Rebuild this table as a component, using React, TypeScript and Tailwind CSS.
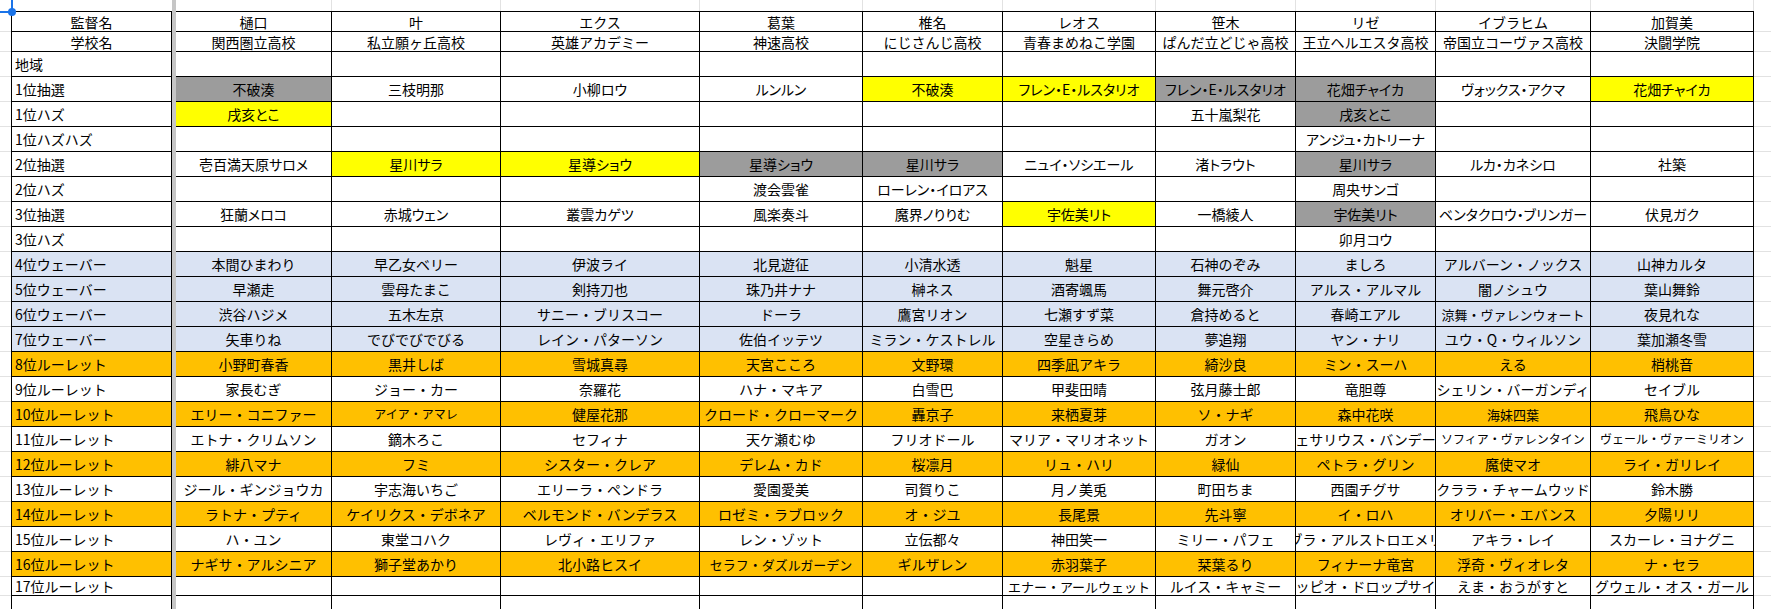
import clsx from "clsx";

type Tone = "w" | "b" | "o";

const HEAD: [string, string][] = [
  ["樋口", "関西圏立高校"],
  ["叶", "私立願ヶ丘高校"],
  ["エクス", "英雄アカデミー"],
  ["葛葉", "神速高校"],
  ["椎名", "にじさんじ高校"],
  ["レオス", "青春まめねこ学園"],
  ["笹木", "ぱんだ立どじゃ高校"],
  ["リゼ", "王立ヘルエスタ高校"],
  ["イブラヒム", "帝国立コーヴァス高校"],
  ["加賀美", "決闘学院"],
];

const E = ["", "", "", "", "", "", "", "", "", ""];

// "flags|text"  g = gray, y = yellow, s = 12px, m = 13px
const ROWS: { label: string; tone: Tone; cells: string[]; palt?: boolean }[] = [
  { label: "地域", tone: "w", cells: E },
  {
    label: "1位抽選",
    tone: "w",
    palt: true,
    cells: ["g|不破湊", "三枝明那", "小柳ロウ", "ルンルン", "y|不破湊", "y|フレン・E・ルスタリオ", "g|フレン・E・ルスタリオ", "g|花畑チャイカ", "ヴォックス・アクマ", "y|花畑チャイカ"],
  },
  { label: "1位ハズ", tone: "w", palt: true, cells: ["y|戌亥とこ", "", "", "", "", "", "五十嵐梨花", "g|戌亥とこ", "", ""] },
  { label: "1位ハズハズ", tone: "w", palt: true, cells: ["", "", "", "", "", "", "", "アンジュ・カトリーナ", "", ""] },
  {
    label: "2位抽選",
    tone: "w",
    palt: true,
    cells: ["壱百満天原サロメ", "y|星川サラ", "y|星導ショウ", "g|星導ショウ", "g|星川サラ", "ニュイ・ソシエール", "渚トラウト", "g|星川サラ", "ルカ・カネシロ", "社築"],
  },
  { label: "2位ハズ", tone: "w", palt: true, cells: ["", "", "", "渡会雲雀", "ローレン・イロアス", "", "", "周央サンゴ", "", ""] },
  {
    label: "3位抽選",
    tone: "w",
    palt: true,
    cells: ["狂蘭メロコ", "赤城ウェン", "叢雲カゲツ", "風楽奏斗", "魔界ノりりむ", "y|宇佐美リト", "一橋綾人", "g|宇佐美リト", "ベンタクロウ・ブリンガー", "伏見ガク"],
  },
  { label: "3位ハズ", tone: "w", palt: true, cells: ["", "", "", "", "", "", "", "卯月コウ", "", ""] },
  {
    label: "4位ウェーバー",
    tone: "b",
    cells: ["本間ひまわり", "早乙女ベリー", "伊波ライ", "北見遊征", "小清水透", "魁星", "石神のぞみ", "ましろ", "アルバーン・ノックス", "山神カルタ"],
  },
  {
    label: "5位ウェーバー",
    tone: "b",
    cells: ["早瀬走", "雲母たまこ", "剣持刀也", "珠乃井ナナ", "榊ネス", "酒寄颯馬", "舞元啓介", "アルス・アルマル", "闇ノシュウ", "葉山舞鈴"],
  },
  {
    label: "6位ウェーバー",
    tone: "b",
    cells: ["渋谷ハジメ", "五木左京", "サニー・ブリスコー", "ドーラ", "鷹宮リオン", "七瀬すず菜", "倉持めると", "春崎エアル", "m|涼舞・ヴァレンウォート", "夜見れな"],
  },
  {
    label: "7位ウェーバー",
    tone: "b",
    cells: ["矢車りね", "でびでびでびる", "レイン・パターソン", "佐伯イッテツ", "ミラン・ケストレル", "空星きらめ", "夢追翔", "ヤン・ナリ", "ユウ・Q・ウィルソン", "葉加瀬冬雪"],
  },
  {
    label: "8位ルーレット",
    tone: "o",
    cells: ["小野町春香", "黒井しば", "雪城真尋", "天宮こころ", "文野環", "四季凪アキラ", "綺沙良", "ミン・スーハ", "える", "梢桃音"],
  },
  {
    label: "9位ルーレット",
    tone: "w",
    cells: ["家長むぎ", "ジョー・カー", "奈羅花", "ハナ・マキア", "白雪巴", "甲斐田晴", "弦月藤士郎", "竜胆尊", "シェリン・バーガンディ", "セイブル"],
  },
  {
    label: "10位ルーレット",
    tone: "o",
    cells: ["エリー・コニファー", "s|アイア・アマレ", "健屋花那", "クロード・クローマーク", "轟京子", "来栖夏芽", "ソ・ナギ", "森中花咲", "m|海妹四葉", "飛鳥ひな"],
  },
  {
    label: "11位ルーレット",
    tone: "w",
    cells: ["エトナ・クリムソン", "鏑木ろこ", "セフィナ", "天ケ瀬むゆ", "フリオドール", "マリア・マリオネット", "ガオン", "ヴェサリウス・バンデーラ", "s|ソフィア・ヴァレンタイン", "s|ヴェール・ヴァーミリオン"],
  },
  {
    label: "12位ルーレット",
    tone: "o",
    cells: ["緋八マナ", "フミ", "シスター・クレア", "デレム・カド", "桜凛月", "リュ・ハリ", "緑仙", "ペトラ・グリン", "魔使マオ", "ライ・ガリレイ"],
  },
  {
    label: "13位ルーレット",
    tone: "w",
    cells: ["ジール・ギンジョウカ", "宇志海いちご", "エリーラ・ペンドラ", "愛園愛美", "司賀りこ", "月ノ美兎", "町田ちま", "西園チグサ", "クララ・チャームウッド", "鈴木勝"],
  },
  {
    label: "14位ルーレット",
    tone: "o",
    cells: ["ラトナ・プティ", "ケイリクス・デボネア", "ベルモンド・バンデラス", "ロゼミ・ラブロック", "オ・ジユ", "長尾景", "先斗寧", "イ・ロハ", "オリバー・エバンス", "夕陽リリ"],
  },
  {
    label: "15位ルーレット",
    tone: "w",
    cells: ["ハ・ユン", "東堂コハク", "レヴィ・エリファ", "レン・ゾット", "立伝都々", "神田笑一", "ミリー・パフェ", "ガブラ・アルストロエメリア", "アキラ・レイ", "スカーレ・ヨナグニ"],
  },
  {
    label: "16位ルーレット",
    tone: "o",
    cells: ["ナギサ・アルシニア", "獅子堂あかり", "北小路ヒスイ", "m|セラフ・ダズルガーデン", "ギルザレン", "赤羽葉子", "栞葉るり", "フィナーナ竜宮", "浮奇・ヴィオレタ", "ナ・セラ"],
  },
];

const LAST = ["", "", "", "", "", "m|エナー・アールウェット", "ルイス・キャミー", "ルッピオ・ドロップサイド", "えま・おうがすと", "グウェル・オス・ガール"];

const toneBg: Record<Tone, string> = {
  w: "bg-white",
  b: "bg-[#dae3f3]",
  o: "bg-[#ffc000]",
};

function parse(c: string) {
  const i = c.indexOf("|");
  const flags = i >= 0 ? c.slice(0, i) : "";
  const text = i >= 0 ? c.slice(i + 1) : c;
  return {
    text,
    fill: flags.includes("g") ? "bg-[#9c9c9c]" : flags.includes("y") ? "bg-[#ffff00]" : "",
    size: flags.includes("s") ? "text-[12px]" : flags.includes("m") ? "text-[13px]" : "",
  };
}

function SheetRow({
  label,
  tone = "w",
  cells,
  top = false,
  bottom = true,
  center = false,
  palt = false,
}: {
  label: string;
  tone?: Tone;
  cells: string[];
  top?: boolean;
  bottom?: boolean;
  center?: boolean;
  palt?: boolean;
}) {
  const bg = toneBg[tone];
  return (
    <>
      <div className={clsx(bottom && "border-b border-[#e2e2e2]")} />
      <div
        className={clsx(
          "flex items-center overflow-hidden whitespace-nowrap border-l border-r border-black",
          bottom && "border-b",
          top && "border-t",
          center ? "justify-center" : "pl-[3px]",
          bg
        )}
      >
        {label}
      </div>
      <div className="bg-[#c6c6c6]" />
      {cells.map((c, i) => {
        const p = parse(c);
        return (
          <div
            key={i}
            className={clsx(
              "flex items-center justify-center overflow-hidden whitespace-nowrap border-r border-black",
              bottom && "border-b",
              top && "border-t",
              p.fill || bg,
              p.size,
              palt && "[font-feature-settings:'palt']"
            )}
          >
            {p.text}
          </div>
        );
      })}
      <div className={clsx(bottom && "border-b border-[#e2e2e2]")} />
    </>
  );
}

export default function App() {
  return (
    <div className="relative h-[609px] w-[1771px] overflow-hidden bg-white font-['Noto_Sans_CJK_JP',sans-serif] text-[14px] leading-none text-black">
      <div className="grid h-full grid-cols-[11px_161px_4px_156px_169px_199px_163px_140px_153px_140px_140px_155px_163px_1fr] grid-rows-[11px_21px_20px_repeat(21,25px)_19px_1fr]">
        {/* strip above the sheet */}
        <div />
        <div />
        <div className="bg-[#c6c6c6]" />
        {E.map((_, i) => (
          <div key={i} className="border-r border-[#e2e2e2]" />
        ))}
        <div />

        <SheetRow label="監督名" cells={HEAD.map((h) => h[0])} top center />
        <SheetRow label="学校名" cells={HEAD.map((h) => h[1])} center />
        {ROWS.map((r) => (
          <SheetRow key={r.label} label={r.label} tone={r.tone} cells={r.cells} palt={r.palt} />
        ))}
        <SheetRow label="17位ルーレット" cells={LAST} />
        <SheetRow label="" cells={E} bottom={false} />
      </div>

      {/* selection handle */}
      <div className="absolute left-0 top-[11px] h-[2px] w-[12px] bg-[#1a73e8]" />
      <div className="absolute left-[11px] top-0 h-[12px] w-[2px] bg-[#1a73e8]" />
      <div className="absolute left-[8px] top-[8px] h-[8px] w-[8px] rounded-full bg-[#1a73e8]" />
    </div>
  );
}
